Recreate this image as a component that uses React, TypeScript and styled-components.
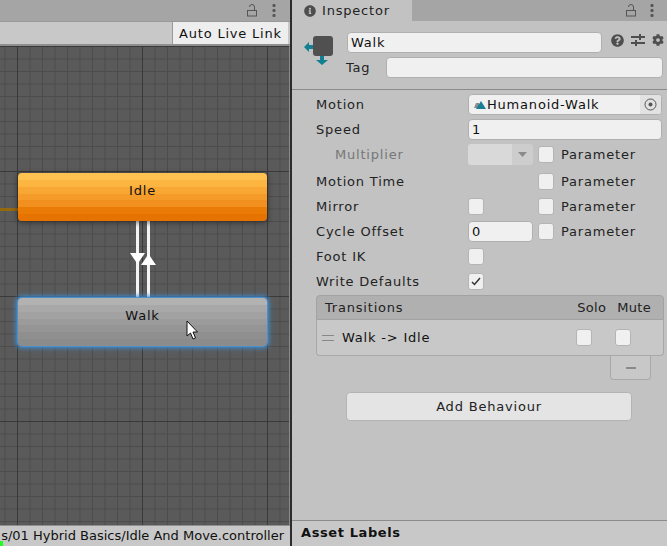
import styled, { createGlobalStyle } from "styled-components";
import { FaCog, FaInfoCircle, FaQuestionCircle } from "react-icons/fa";

const GlobalStyle = createGlobalStyle`
  html, body { margin: 0; padding: 0; background: #c2c2c2; }
  body { font-family: "DejaVu Sans", Verdana, sans-serif; font-size: 13px; letter-spacing: 0.8px; color: #111; }
`;

const bands = (colors: string[]) => {
  const step = 100 / colors.length;
  return colors
    .map((c, i) => `${c} ${(i * step).toFixed(2)}% ${((i + 1) * step).toFixed(2)}%`)
    .join(", ");
};

const IDLE_BANDS = bands(["#ffc250", "#fdb542", "#f9a734", "#f59b29", "#f1901e", "#ea7c06", "#e67300"]);
const WALK_BANDS = bands(["#b2b2b2", "#a8a8a8", "#a2a2a2", "#9b9b9b", "#959595", "#8f8f8f", "#8c8c8c"]);

const Window = styled.div`
  width: 667px;
  height: 546px;
  display: flex;
  overflow: hidden;
`;

const GraphPanel = styled.div`
  width: 290px;
  flex: none;
  display: flex;
  flex-direction: column;
`;

const TabBar = styled.div`
  height: 21px;
  flex: none;
  background: #a5a5a5;
  display: flex;
  align-items: center;
  justify-content: flex-end;
  gap: 14px;
  padding-right: 14px;
`;

const Toolbar = styled.div`
  height: 25px;
  flex: none;
  background: #c8c8c8;
  border-top: 1px solid #999;
  border-bottom: 2px solid #8f8f8f;
  box-sizing: border-box;
  display: flex;
  justify-content: flex-end;
  padding-right: 2px;
`;

const ToolButton = styled.div`
  width: 115px;
  background: #eeeeee;
  border-left: 1px solid #9a9a9a;
  text-align: center;
  line-height: 23px;
`;

const Graph = styled.div`
  position: relative;
  flex: 1;
  overflow: hidden;
  border-right: 1px solid #8a8a8a;
  background-color: #5a5a5a;
  background-image:
    linear-gradient(to right, #393939 1px, transparent 1px),
    linear-gradient(to bottom, #393939 1px, transparent 1px),
    linear-gradient(to right, #4c4c4c 1px, transparent 1px),
    linear-gradient(to bottom, #4c4c4c 1px, transparent 1px);
  background-size: 125px 125px, 125px 125px, 12.5px 12.5px, 12.5px 12.5px;
  background-position: 17px 0, 0 0, 4.5px 0, 0 0;
`;

const StateNode = styled.div<{ $top: number; $bands: string; $selected?: boolean }>`
  position: absolute;
  left: 18px;
  top: ${(p) => p.$top}px;
  width: 249px;
  height: 48px;
  box-sizing: border-box;
  border-radius: 4px;
  background: linear-gradient(to bottom, ${(p) => p.$bands});
  text-align: center;
  line-height: 35px;
  box-shadow: ${(p) =>
    p.$selected
      ? "0 0 1px 1px #4d93d0, 0 0 5px 2px #3f8fd6"
      : "0 1px 5px 1px rgba(30,30,30,0.55)"};
`;

const Wire = styled.div<{ $left: number; $top: number; $height: number; $color: string; $thick: number }>`
  position: absolute;
  left: ${(p) => p.$left}px;
  top: ${(p) => p.$top}px;
  height: ${(p) => p.$height}px;
  width: ${(p) => p.$thick}px;
  background: ${(p) => p.$color};
`;

const ArrowSvg = styled.svg<{ $left: number; $top: number }>`
  position: absolute;
  left: ${(p) => p.$left}px;
  top: ${(p) => p.$top}px;
`;

const StatusBar = styled.div`
  position: relative;
  height: 21px;
  flex: none;
  box-sizing: border-box;
  background: #c8c8c8;
  border-top: 1px solid #8f8f8f;
  overflow: hidden;
  display: flex;
  justify-content: flex-end;
  padding-right: 6px;
  line-height: 20px;
  white-space: nowrap;
  letter-spacing: 0;
`;

const GreenMark = styled.div`
  position: absolute;
  left: 0;
  bottom: 0;
  width: 3px;
  height: 5px;
  background: #22ff22;
`;

const Divider = styled.div`
  width: 2px;
  flex: none;
  background: #2c2c2c;
`;

const Inspector = styled.div`
  flex: 1;
  display: flex;
  flex-direction: column;
  background: #c2c2c2;
`;

const InspectorTabs = styled.div`
  height: 21px;
  flex: none;
  background: #a5a5a5;
  display: flex;
  align-items: center;
  gap: 13px;
  padding-right: 13px;
`;

const InspectorTab = styled.div`
  width: 120px;
  height: 21px;
  background: #c2c2c2;
  display: flex;
  align-items: center;
  gap: 6px;
  padding-left: 12px;
  box-sizing: border-box;
  margin-right: auto;
  color: #222;
`;

const Header = styled.div`
  height: 69px;
  flex: none;
  box-sizing: border-box;
  border-bottom: 1px solid #8c8c8c;
  display: flex;
  padding: 11px 3px 0 11px;
`;

const HeaderBody = styled.div`
  margin-left: 12px;
  flex: 1;
  display: flex;
  flex-direction: column;
  gap: 4px;
`;

const NameRow = styled.div`
  display: flex;
  gap: 9px;
  align-items: flex-start;
`;

const HeaderIcons = styled.div`
  display: flex;
  align-items: center;
  gap: 7px;
  color: #4e4e4e;
  height: 16px;
`;

const TagRow = styled.div`
  display: flex;
  align-items: center;
  margin-right: 1px;
`;

const TagLabel = styled.span`
  width: 40px;
  margin-left: -1px;
  color: #222;
`;

const Field = styled.div<{ $width?: number }>`
  box-sizing: border-box;
  height: 21px;
  width: ${(p) => (p.$width ? `${p.$width}px` : "auto")};
  flex: ${(p) => (p.$width ? "none" : "1")};
  background: #f0f0f0;
  border: 1px solid #b0b0b0;
  border-radius: 4px;
  padding-left: 3px;
  line-height: 19px;
`;

const Rows = styled.div`
  padding: 2px 4px 0 24px;
`;

const Row = styled.div<{ $after?: number }>`
  display: grid;
  grid-template-columns: 152px 70px 23px 1fr;
  align-items: center;
  height: 25px;
  margin-bottom: ${(p) => p.$after ?? 0}px;
`;

const Label = styled.span<{ $muted?: boolean }>`
  color: ${(p) => (p.$muted ? "#777" : "#222")};
  padding-left: ${(p) => (p.$muted ? 19 : 0)}px;
`;

const WideCell = styled.div`
  grid-column: 2 / 5;
  display: flex;
  margin-right: 1px;
`;

const ObjectField = styled(Field)`
  flex: 1;
  display: flex;
  align-items: center;
  padding: 0 0 0 4px;
`;

const PickerSlot = styled.span`
  margin-left: auto;
  width: 21px;
  height: 19px;
  background: #e2e2e2;
  display: flex;
  align-items: center;
  justify-content: center;
  border-radius: 0 3px 3px 0;
`;

const Select = styled.div`
  display: flex;
  height: 21px;
  width: 65px;
`;

const SelectValue = styled.div`
  width: 44px;
  background: #d9d9d9;
  border-radius: 3px 0 0 3px;
`;

const SelectArrow = styled.div`
  flex: 1;
  background: #cdcdcd;
  border-radius: 0 3px 3px 0;
  display: flex;
  align-items: center;
  justify-content: center;
`;

const Check = styled.div`
  box-sizing: border-box;
  width: 16px;
  height: 17px;
  background: #f0f0f0;
  border: 1px solid #b4b4b4;
  border-radius: 3px;
  display: flex;
  align-items: center;
  justify-content: center;
`;

const ParamText = styled.span`
  color: #222;
`;

const Transitions = styled.div`
  margin: 1px 3px 0 24px;
`;

const ListHeader = styled.div`
  height: 25px;
  box-sizing: border-box;
  background: #b0b0b0;
  border: 1px solid #a2a2a2;
  border-radius: 4px 4px 0 0;
  display: flex;
  align-items: center;
  padding: 0 12px 0 8px;
  color: #222;
`;

const HeaderTitle = styled.span`
  margin-right: auto;
`;

const ColumnTitle = styled.span<{ $after?: number }>`
  letter-spacing: 0.3px;
  margin-right: ${(p) => p.$after ?? 0}px;
`;

const ListBody = styled.div`
  height: 36px;
  box-sizing: border-box;
  background: #c8c8c8;
  border: 1px solid #a8a8a8;
  border-top: none;
  border-radius: 0 0 4px 4px;
  display: flex;
  align-items: center;
  padding-left: 5px;
`;

const DragHandle = styled.div`
  width: 12px;
  height: 4px;
  border-top: 1px solid #888;
  border-bottom: 1px solid #888;
  margin-right: 8px;
`;

const ListChecks = styled.div`
  margin-left: auto;
  margin-right: 32px;
  display: flex;
  gap: 23px;
`;

const RemoveWrap = styled.div`
  display: flex;
  justify-content: flex-end;
  padding-right: 13px;
`;

const RemoveButton = styled.div`
  width: 41px;
  height: 24px;
  box-sizing: border-box;
  background: #c8c8c8;
  border: 1px solid #a8a8a8;
  border-top: none;
  border-radius: 0 0 4px 4px;
  display: flex;
  align-items: center;
  justify-content: center;
`;

const Minus = styled.div`
  width: 10px;
  height: 2px;
  background: #8a8a8a;
`;

const AddButton = styled.div`
  margin: 12px 0 0 30px;
  width: 286px;
  height: 29px;
  box-sizing: border-box;
  background: #e4e4e4;
  border: 1px solid #b4b4b4;
  border-radius: 4px;
  text-align: center;
  line-height: 27px;
  color: #222;
`;

const AssetLabels = styled.div`
  margin-top: auto;
  height: 26px;
  box-sizing: border-box;
  background: #c8c8c8;
  border-top: 1px solid #8c8c8c;
  padding-left: 9px;
  line-height: 24px;
  font-weight: 700;
  letter-spacing: 0.6px;
  color: #111;
`;

const LockIcon = () => (
  <svg width="11" height="13" viewBox="0 0 11 13" fill="none" stroke="#555" strokeWidth="1">
    <rect x="0.5" y="6.5" width="9" height="5.5" />
    <path d="M2.5 3a2.5 2.5 0 0 1 5 0v3.5" />
  </svg>
);

const MenuIcon = () => (
  <svg width="4" height="13" viewBox="0 0 4 13" fill="#555">
    <rect x="0.5" y="0" width="3" height="3" rx="1" />
    <rect x="0.5" y="5" width="3" height="3" rx="1" />
    <rect x="0.5" y="10" width="3" height="3" rx="1" />
  </svg>
);

const SlidersIcon = () => (
  <svg width="14" height="14" viewBox="0 0 14 14" fill="#4e4e4e">
    <rect x="0" y="3" width="14" height="2" />
    <rect x="8" y="1" width="2" height="6" />
    <rect x="0" y="9" width="14" height="2" />
    <rect x="4" y="7" width="2" height="6" />
  </svg>
);

const StateIcon = () => (
  <svg width="32" height="38" viewBox="0 0 32 38">
    <path d="M1 15l5-5v3h5v4H6v3z" fill="#127f92" />
    <path d="M17 23h4v5h4l-6 5-6-5h4z" fill="#127f92" />
    <rect x="10" y="4" width="20" height="20" rx="3" fill="#505050" />
  </svg>
);

const ClipIcon = () => (
  <svg width="14" height="11" viewBox="0 0 14 11">
    <path d="M1 9l2-5h3v5z" fill="#8d8d8d" />
    <path d="M3 10l5-8 5 8z" fill="#177f95" />
  </svg>
);

const PickerIcon = () => (
  <svg width="13" height="13" viewBox="0 0 13 13" fill="none">
    <circle cx="6.5" cy="6.5" r="5.5" stroke="#555" strokeWidth="1" />
    <circle cx="6.5" cy="6.5" r="2" fill="#555" />
  </svg>
);

const CheckMark = () => (
  <svg width="10" height="9" viewBox="0 0 10 9" fill="none" stroke="#333" strokeWidth="1.5">
    <path d="M1 5l2.5 2.5L9 1" />
  </svg>
);

const App = () => (
  <Window>
    <GlobalStyle />
    <GraphPanel>
      <TabBar>
        <LockIcon />
        <MenuIcon />
      </TabBar>
      <Toolbar>
        <ToolButton>Auto Live Link</ToolButton>
      </Toolbar>
      <Graph>
        <Wire $left={0} $top={162} $height={3} $thick={18} $color="#94690f" />
        <Wire $left={136} $top={175} $height={78} $thick={3} $color="#f4f4f4" />
        <Wire $left={147} $top={175} $height={78} $thick={3} $color="#f4f4f4" />
        <ArrowSvg $left={130} $top={207} width="15" height="11" viewBox="0 0 15 11">
          <path d="M0 0h15L7.5 11z" fill="#fff" />
        </ArrowSvg>
        <ArrowSvg $left={141} $top={208} width="15" height="11" viewBox="0 0 15 11">
          <path d="M0 11h15L7.5 0z" fill="#fff" />
        </ArrowSvg>
        <StateNode $top={127} $bands={IDLE_BANDS}>Idle</StateNode>
        <StateNode $top={252} $bands={WALK_BANDS} $selected>Walk</StateNode>
        <ArrowSvg $left={186} $top={274} width="13" height="20" viewBox="0 0 13 20">
          <path d="M1 1v15l3.5-3 2.5 6 2.5-1-2.5-6h4.5z" fill="#fff" stroke="#111" strokeWidth="1" />
        </ArrowSvg>
      </Graph>
      <StatusBar>
        <GreenMark />
        s/01 Hybrid Basics/Idle And Move.controller
      </StatusBar>
    </GraphPanel>
    <Divider />
    <Inspector>
      <InspectorTabs>
        <InspectorTab>
          <FaInfoCircle size={12} color="#4e4e4e" />
          Inspector
        </InspectorTab>
        <LockIcon />
        <MenuIcon />
      </InspectorTabs>
      <Header>
        <StateIcon />
        <HeaderBody>
          <NameRow>
            <Field>Walk</Field>
            <HeaderIcons>
              <FaQuestionCircle size={13} />
              <SlidersIcon />
              <FaCog size={12} />
            </HeaderIcons>
          </NameRow>
          <TagRow>
            <TagLabel>Tag</TagLabel>
            <Field />
          </TagRow>
        </HeaderBody>
      </Header>
      <Rows>
        <Row>
          <Label>Motion</Label>
          <WideCell>
            <ObjectField>
              <ClipIcon />
              Humanoid-Walk
              <PickerSlot>
                <PickerIcon />
              </PickerSlot>
            </ObjectField>
          </WideCell>
        </Row>
        <Row>
          <Label>Speed</Label>
          <WideCell>
            <Field>1</Field>
          </WideCell>
        </Row>
        <Row $after={2}>
          <Label $muted>Multiplier</Label>
          <Select>
            <SelectValue />
            <SelectArrow>
              <svg width="9" height="5" viewBox="0 0 9 5">
                <path d="M0 0h9L4.5 5z" fill="#8a8a8a" />
              </svg>
            </SelectArrow>
          </Select>
          <Check />
          <ParamText>Parameter</ParamText>
        </Row>
        <Row>
          <Label>Motion Time</Label>
          <span />
          <Check />
          <ParamText>Parameter</ParamText>
        </Row>
        <Row>
          <Label>Mirror</Label>
          <Check />
          <Check />
          <ParamText>Parameter</ParamText>
        </Row>
        <Row>
          <Label>Cycle Offset</Label>
          <Field $width={65}>0</Field>
          <Check />
          <ParamText>Parameter</ParamText>
        </Row>
        <Row>
          <Label>Foot IK</Label>
          <Check />
        </Row>
        <Row>
          <Label>Write Defaults</Label>
          <Check>
            <CheckMark />
          </Check>
        </Row>
      </Rows>
      <Transitions>
        <ListHeader>
          <HeaderTitle>Transitions</HeaderTitle>
          <ColumnTitle $after={11}>Solo</ColumnTitle>
          <ColumnTitle>Mute</ColumnTitle>
        </ListHeader>
        <ListBody>
          <DragHandle />
          Walk -&gt; Idle
          <ListChecks>
            <Check />
            <Check />
          </ListChecks>
        </ListBody>
        <RemoveWrap>
          <RemoveButton>
            <Minus />
          </RemoveButton>
        </RemoveWrap>
        <AddButton>Add Behaviour</AddButton>
      </Transitions>
      <AssetLabels>Asset Labels</AssetLabels>
    </Inspector>
  </Window>
);

export default App;
